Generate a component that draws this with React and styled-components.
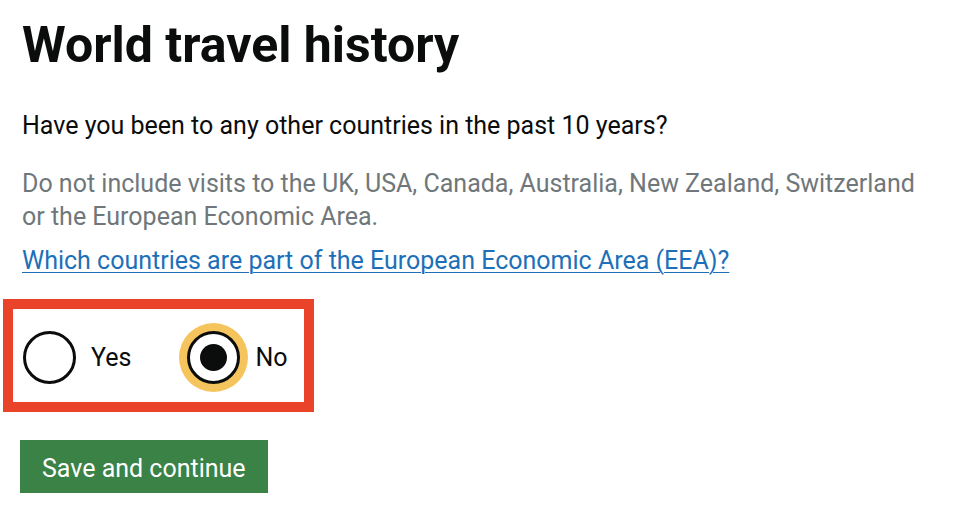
import React, { useState } from "react";
import styled, { createGlobalStyle } from "styled-components";

const GlobalStyle = createGlobalStyle`
  html, body {
    margin: 0;
    padding: 0;
    background: #ffffff;
  }
  body {
    font-family: Roboto, "Liberation Sans", Arial, sans-serif;
    color: #0b0c0c;
  }
`;

const Page = styled.main`
  padding: 18px 0 0 22px;
  width: 944px;
`;

const Title = styled.h1`
  margin: 0 0 38px;
  font-size: 50px;
  line-height: 54px;
  font-weight: 700;
`;

const Question = styled.p`
  margin: 0 0 25px;
  font-size: 25px;
  line-height: 32px;
`;

const Hint = styled.p`
  max-width: 900px;
  margin: 0 0 12px;
  font-size: 25px;
  line-height: 33px;
  color: #6f777b;
`;

const Link = styled.a`
  display: inline-block;
  font-size: 25px;
  line-height: 32px;
  color: #1d70b8;
  text-decoration: underline;
  text-underline-offset: 3px;
  text-decoration-thickness: 1px;
`;

const Highlight = styled.fieldset`
  display: flex;
  align-items: center;
  gap: 56px;
  width: max-content;
  margin: 22px 0 0 -19px;
  padding: 22px 17px 18px 10px;
  border: 10px solid #e9432a;
  min-inline-size: auto;
`;

const Option = styled.label`
  display: flex;
  align-items: center;
  gap: 15px;
  font-size: 25px;
  cursor: pointer;
`;

const Circle = styled.span`
  position: relative;
  box-sizing: border-box;
  width: 53px;
  height: 53px;
  border: 3px solid #0b0c0c;
  border-radius: 50%;
  background: #ffffff;
  box-shadow: ${({ focused }) => (focused ? "0 0 0 8px #f6c45c" : "none")};
  display: flex;
  align-items: center;
  justify-content: center;

  &::after {
    content: "";
    width: 27px;
    height: 27px;
    border-radius: 50%;
    background: #0b0c0c;
    display: ${({ checked }) => (checked ? "block" : "none")};
  }
`;

const HiddenInput = styled.input`
  position: absolute;
  opacity: 0;
  width: 0;
  height: 0;
`;

const Button = styled.button`
  margin: 28px 0 0 -2px;
  padding: 11px 22px 6px;
  border: 0;
  background: #3a8246;
  box-shadow: 0 3px 0 #1f4428;
  color: #ffffff;
  font-family: inherit;
  font-size: 25px;
  line-height: 36px;
  cursor: pointer;
`;

const options = ["Yes", "No"];

export default function App() {
  const [value, setValue] = useState("No");

  return (
    <>
      <GlobalStyle />
      <Page>
        <Title>World travel history</Title>
        <Question>Have you been to any other countries in the past 10 years?</Question>
        <Hint>
          Do not include visits to the UK, USA, Canada, Australia, New Zealand, Switzerland
          or the European Economic Area.
        </Hint>
        <Link href="#">Which countries are part of the European Economic Area (EEA)?</Link>
        <Highlight>
          {options.map((opt) => (
            <Option key={opt}>
              <HiddenInput
                type="radio"
                name="travel"
                value={opt}
                checked={value === opt}
                onChange={() => setValue(opt)}
              />
              <Circle checked={value === opt} focused={value === opt} />
              {opt}
            </Option>
          ))}
        </Highlight>
        <div>
          <Button>Save and continue</Button>
        </div>
      </Page>
    </>
  );
}
